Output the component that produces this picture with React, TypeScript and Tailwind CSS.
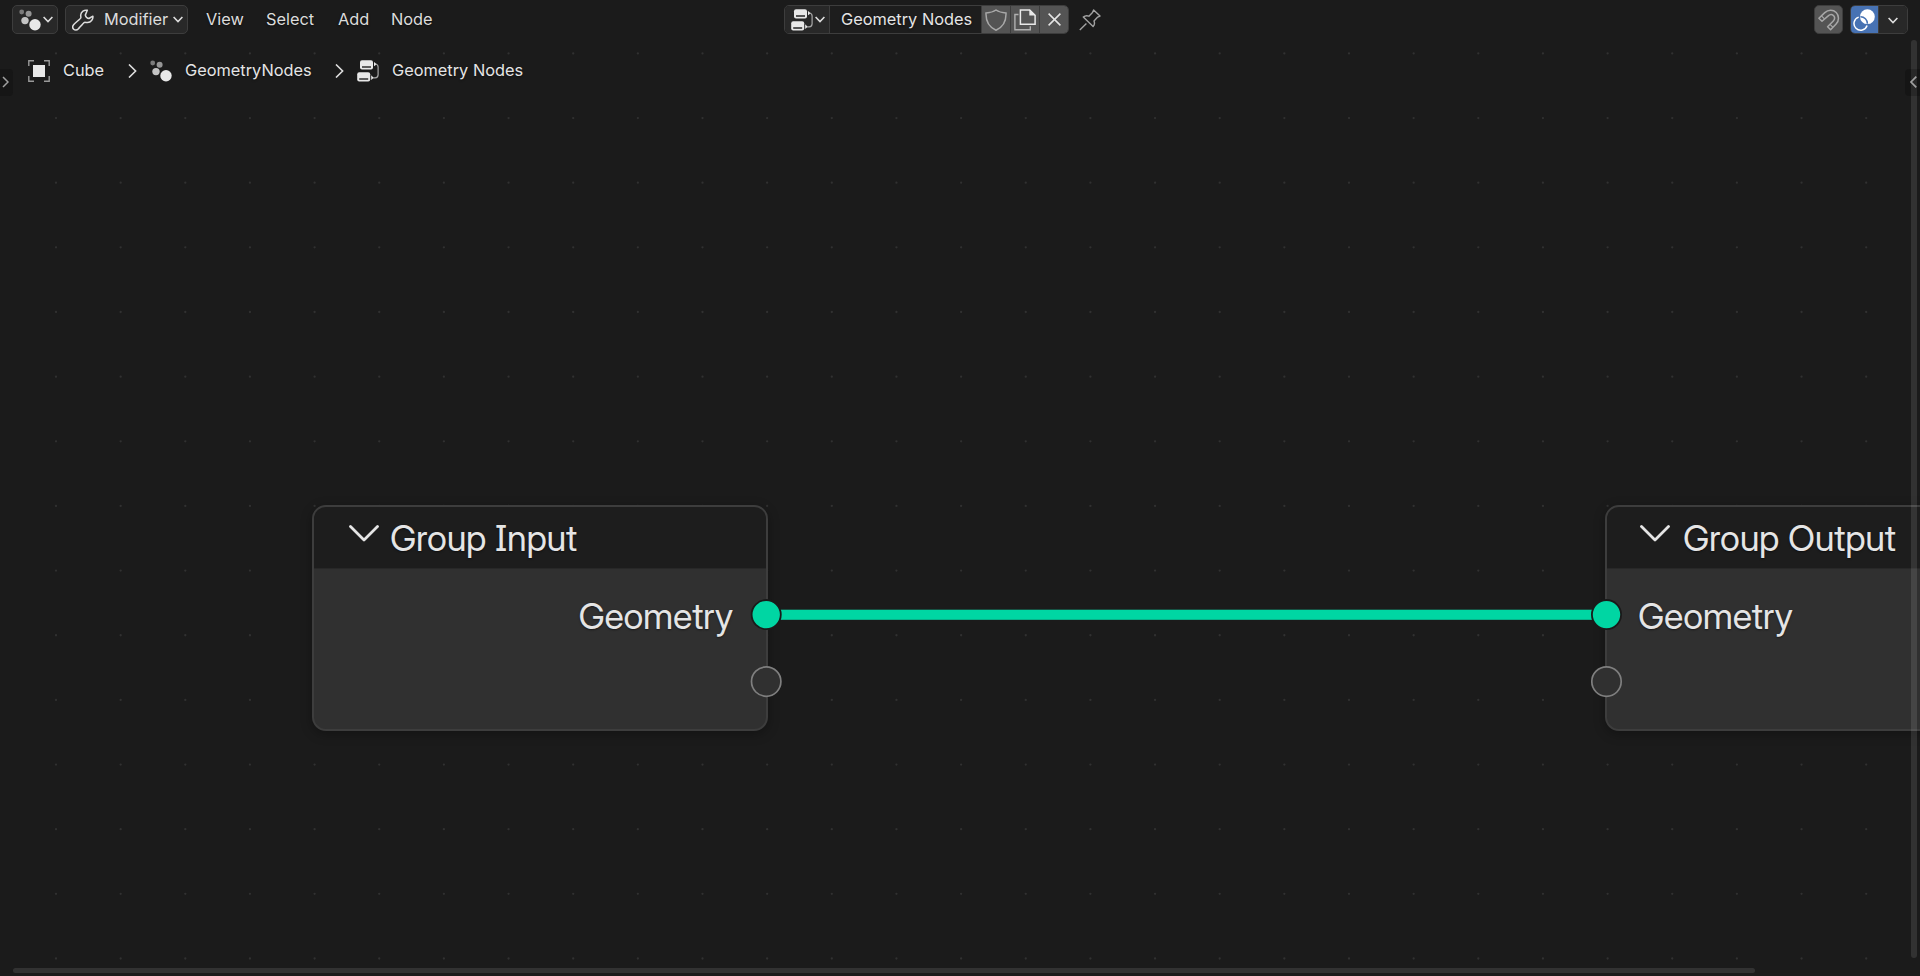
import type { ReactNode } from 'react';

const GRID_STEP = 64.65;
const dots = Array.from({ length: 15 }, (_, row) =>
  Array.from({ length: 29 }, (_, col) => ({
    x: 56 + col * GRID_STEP,
    y: 53.4 + row * GRID_STEP,
  }))
).flat();

interface IconProps {
  children: ReactNode;
  className?: string;
}

function Icon({ children, className = '' }: IconProps) {
  return (
    <svg viewBox="0 0 22 22" fill="none" className={`h-[22px] w-[22px] shrink-0 ${className}`}>
      {children}
    </svg>
  );
}

function ParticlesIcon() {
  return (
    <Icon>
      <circle cx="2.7" cy="3" r="2.4" fill="#7b7b7b" />
      <circle cx="9.6" cy="4.7" r="3" fill="#969696" />
      <circle cx="6" cy="11.6" r="3.7" fill="#c4c4c4" />
      <circle cx="16" cy="15.7" r="5.7" fill="#e8e8e8" />
    </Icon>
  );
}

function NodeTreeIcon() {
  return (
    <Icon>
      <rect x="3" y="0.3" width="13" height="9.2" rx="2" fill="#e8e8e8" />
      <path d="M5 7h9" stroke="#222" strokeWidth="1.4" />
      <rect x="0.2" y="12.3" width="13" height="9.2" rx="2" fill="#e8e8e8" />
      <path d="M2.2 19h9" stroke="#222" strokeWidth="1.4" />
      <path d="M17 2v4.2l2.8-2z" fill="#e8e8e8" />
      <path d="M14.2 15.3v4.6l2.5-2.2z" fill="#e8e8e8" />
      <path d="M18.6 4c1.6.3 2.5 1.4 2.5 3v7.8c0 1.9-1.1 3-3 3h-2" stroke="#a8a8a8" strokeWidth="1.2" />
    </Icon>
  );
}

function ObjectIcon() {
  return (
    <Icon>
      <rect x="5" y="5" width="12" height="12" fill="#e8e8e8" />
      <path d="M.8 6V.8H6M16 .8h5.2V6M21.2 16v5.2H16M6 21.2H.8V16" stroke="#9a9a9a" strokeWidth="1.4" />
    </Icon>
  );
}

function WrenchIcon() {
  return (
    <Icon>
      <path
        d="M15.3 1.3C12.2.6 9 2.6 8.7 6c-.1 1.2.3 2.2.1 2.8-.2.9-5.6 5-7.2 6.9-1.2 1.5-1 3.4.1 4.5 1.2 1.2 3.2 1.2 4.5-.2 1.7-1.8 5.3-6.4 6.3-6.6.9-.2 1.8.3 3.1.2 3.3-.3 5.7-3.2 5.3-6.4l-4 2.3c-1.7-.1-3-1.2-3.6-3.4z"
        stroke="#dedede"
        strokeWidth="1.5"
        strokeLinejoin="round"
      />
    </Icon>
  );
}

function ShieldIcon() {
  return (
    <Icon>
      <path
        d="M11 1c-2.4 1.7-6 2.7-10 2.9-.3 8 1.9 13.7 10 17.3 8.1-3.6 10.3-9.3 10-17.3-4-.2-7.6-1.2-10-2.9z"
        stroke="#a8a8a8"
        strokeWidth="1.5"
      />
    </Icon>
  );
}

function DuplicateIcon() {
  return (
    <Icon>
      <path d="M4.5 5.5H.9v15.3h15.4v-3.5" stroke="#b0b0b0" strokeWidth="1.4" />
      <path d="M6.4.9h9.3l5.4 5.4v8.9H6.4z" stroke="#e8e8e8" strokeWidth="1.5" />
      <path d="M15.3.6v6h6z" fill="#e8e8e8" />
    </Icon>
  );
}

function PinIcon() {
  return (
    <Icon>
      <path
        d="M.8 21l6.6-6.6M14.6.9l6.4 6.2-2.3 1-3.7 3.9c.9 2.2.5 4.1-.9 5.6L4.3 8.1c1.6-1.4 3.6-1.7 5.6-.9l3.6-3.6z"
        stroke="#a2a2a2"
        strokeWidth="1.4"
        strokeLinejoin="round"
      />
    </Icon>
  );
}

function MagnetIcon() {
  return (
    <Icon>
      <path
        d="M.9 9.3 6.8 3.6C10.2.4 15.2.5 18.2 3.5c3 3.1 3.1 8.1-.1 11.5l-5.5 5.8-3-3 5.7-5.9c1.6-1.7 1.5-3.9.2-5.3-1.4-1.3-3.6-1.3-5.3.3L4 12.3z"
        stroke="#a8a8a8"
        strokeWidth="1.5"
        strokeLinejoin="round"
      />
      <path d="M3.4 6.9l3.1 3M12 15.3l3 3" stroke="#a8a8a8" strokeWidth="1.2" />
    </Icon>
  );
}

function OverlayIcon() {
  return (
    <Icon>
      <circle cx="14.4" cy="7.7" r="7.4" fill="#fff" />
      <path d="M5.7 8.1a6.7 6.7 0 1 0 8.4 8.4" stroke="#fff" strokeWidth="1.5" />
      <path d="M7.4 7.7a6.8 6.8 0 0 1 7 7" stroke="#4772b3" strokeWidth="1.5" />
    </Icon>
  );
}

function ChevronDown() {
  return (
    <svg viewBox="0 0 10 7" fill="none" className="h-[7px] w-[10px] shrink-0">
      <path d="M.6 1L5 5.5 9.4 1" stroke="#dedede" strokeWidth="1.6" />
    </svg>
  );
}

function CrumbArrow() {
  return (
    <svg viewBox="0 0 9 14" fill="none" className="h-[14px] w-[9px] shrink-0">
      <path d="M1 .5L7.6 7 1 13.5" stroke="#dedede" strokeWidth="1.6" />
    </svg>
  );
}

function Header() {
  return (
    <header className="flex h-[39px] items-start px-3 pt-[5px] text-[16.35px] leading-[29px]">
      <div className="flex w-[570px] text-[#dcdcdc]">
        <button className="flex h-[29px] w-[46px] items-center gap-[2px] rounded-[5px] border border-[#3d3d3d] bg-[#282828] pl-[6px]">
          <ParticlesIcon />
          <ChevronDown />
        </button>
        <button className="ml-[7px] flex h-[29px] w-[123px] items-center rounded-[5px] border border-[#3d3d3d] bg-[#282828] pl-[6px] pr-1">
          <WrenchIcon />
          <span className="ml-[10px] flex-1 text-left">Modifier</span>
          <ChevronDown />
        </button>
        <nav className="ml-[18px] flex">
          <span className="w-[60px]">View</span>
          <span className="w-[72px]">Select</span>
          <span className="w-[53px]">Add</span>
          <span>Node</span>
        </nav>
      </div>

      <div className="ml-[202px] flex h-[29px] w-[285px] overflow-hidden rounded-[5px] border border-[#3d3d3d] text-[#e5e5e5]">
        <button className="flex w-[45px] shrink-0 items-center gap-[2px] border-r border-[#3d3d3d] bg-[#282828] pl-[6px]">
          <NodeTreeIcon />
          <ChevronDown />
        </button>
        <span className="w-[152px] shrink-0 border-r border-[#3d3d3d] bg-[#1d1d1d] pl-[11px] leading-[27px]">
          Geometry Nodes
        </span>
        <button className="flex w-[29px] shrink-0 items-center justify-center border-r border-[#3d3d3d] bg-[#545454]">
          <ShieldIcon />
        </button>
        <button className="flex w-[29px] shrink-0 items-center justify-center border-r border-[#3d3d3d] bg-[#545454]">
          <DuplicateIcon />
        </button>
        <button className="flex flex-1 items-center justify-center bg-[#545454] pl-px">
          <svg viewBox="0 0 13 13" className="h-[13px] w-[13px]">
            <path d="M.6.6l11.8 11.8M12.4.6L.6 12.4" stroke="#e5e5e5" strokeWidth="1.5" />
          </svg>
        </button>
      </div>
      <div className="ml-[10px] mt-1">
        <PinIcon />
      </div>

      <div className="ml-auto flex">
        <button className="flex h-[29px] w-[29px] items-center justify-center rounded-[5px] border border-[#3d3d3d] bg-[#545454]">
          <MagnetIcon />
        </button>
        <div className="ml-[7px] flex h-[29px] w-[58px] overflow-hidden rounded-[5px] border border-[#3d3d3d]">
          <button className="flex w-[27px] items-center justify-center bg-[#4772b3] pr-px">
            <OverlayIcon />
          </button>
          <button className="flex flex-1 items-center justify-center border-l border-[#3d3d3d] bg-[#282828] pr-px pt-[2px]">
            <ChevronDown />
          </button>
        </div>
      </div>
    </header>
  );
}

function Breadcrumbs() {
  return (
    <div className="flex h-[62px] items-center pl-7 pt-px text-[16.35px] text-[#e5e5e5]">
      <ObjectIcon />
      <span className="ml-[13px] w-[65px]">Cube</span>
      <CrumbArrow />
      <div className="ml-[13px] flex">
        <ParticlesIcon />
      </div>
      <span className="ml-[13px] w-[150px]">GeometryNodes</span>
      <CrumbArrow />
      <div className="ml-[13px] flex">
        <NodeTreeIcon />
      </div>
      <span className="ml-[13px]">Geometry Nodes</span>
    </div>
  );
}

interface NodeProps {
  title: string;
  side: 'input' | 'output';
  className: string;
}

function GeometryNode({ title, side, className }: NodeProps) {
  const isInput = side === 'input';
  return (
    <div
      className={`absolute top-[505px] h-[226px] w-[456px] rounded-[14px] border-2 border-[#3d3d3d] bg-[#303030] font-['Inter_Display','Inter',sans-serif] text-[36px] tracking-[-0.22px] text-[#e5e5e5] shadow-[0_3px_12px_rgba(0,0,0,0.3)] [text-shadow:0_1px_2px_rgba(0,0,0,0.5)] ${className}`}
    >
      <div
        className={`flex h-[62px] items-center rounded-t-[12px] border-b border-[#282828] bg-[#1d1d1d] ${isInput ? 'pl-[35px]' : 'pl-[33px]'}`}
      >
        <svg viewBox="0 0 30 17" fill="none" className="-mt-2 h-[17px] w-[30px] shrink-0">
          <path d="M1.5 1.5L15 15 28.5 1.5" stroke="#e5e5e5" strokeWidth="2.8" strokeLinecap="round" strokeLinejoin="round" />
        </svg>
        <span className={`whitespace-nowrap leading-[60px] ${isInput ? 'ml-[11px]' : 'ml-[13px]'}`}>{title}</span>
      </div>
      <div className={`flex h-[94px] items-center ${isInput ? 'justify-end pr-[33px]' : 'justify-start pl-[31px]'}`}>
        Geometry
      </div>
    </div>
  );
}

function Sockets({ x }: { x: number }) {
  return (
    <g>
      <circle cx={x} cy="614.6" r="14.6" fill="#00d6a3" stroke="#1a1a1a" strokeWidth="1.8" />
      <circle cx={x} cy="681.6" r="14.7" fill="#303030" stroke="#7f7f7f" strokeWidth="1.7" />
    </g>
  );
}

export default function App() {
  return (
    <div className="relative h-screen w-full overflow-hidden bg-[#1b1b1b] font-['Inter',sans-serif] [font-feature-settings:'cv08']">
      {/* node canvas */}
      <div className="absolute inset-0">
        <svg className="absolute inset-0 h-full w-full">
          {dots.map((d, i) => (
            <circle key={i} cx={d.x} cy={d.y} r="1.15" fill="#313131" />
          ))}
        </svg>
        <GeometryNode title="Group Input" side="input" className="left-[312px]" />
        <GeometryNode title="Group Output" side="output" className="left-[1605px]" />
        <svg className="absolute inset-0 h-full w-full">
          <path d="M766 614.8H1606" stroke="#128a6c" strokeWidth="10.4" />
          <path d="M766 614.8H1606" stroke="#00d6a3" strokeWidth="9.4" />
          <Sockets x={766.2} />
          <Sockets x={1606.5} />
        </svg>
      </div>

      <div className="relative [text-shadow:0_1px_2px_rgba(0,0,0,0.5)]">
        <Header />
        <Breadcrumbs />
      </div>

      {/* scrollbars */}
      <div className="absolute left-[1911px] top-10 h-[918px] w-[6px] rounded-full bg-white/10" />
      <div className="absolute left-[13px] top-[968px] h-[5px] w-[1742px] rounded-full bg-white/10" />

      {/* collapsed sidebar tabs */}
      <div className="absolute left-0 top-[69px] flex h-[27px] w-[13px] items-center rounded-r bg-[#161616] pl-[2px]">
        <svg viewBox="0 0 7 12" fill="none" className="-mt-px h-3 w-[7px]">
          <path d="M1 1l5 5-5 5" stroke="#a0a0a0" strokeWidth="1.5" />
        </svg>
      </div>
      <div className="absolute right-0 top-[69px] flex h-[27px] w-[15px] items-center justify-end rounded-l bg-black/20 pr-[3px]">
        <svg viewBox="0 0 7 12" fill="none" className="-mt-px h-3 w-[7px]">
          <path d="M6.3.7L1 6l5.3 5.3" stroke="#a0a0a0" strokeWidth="1.7" />
        </svg>
      </div>
    </div>
  );
}
